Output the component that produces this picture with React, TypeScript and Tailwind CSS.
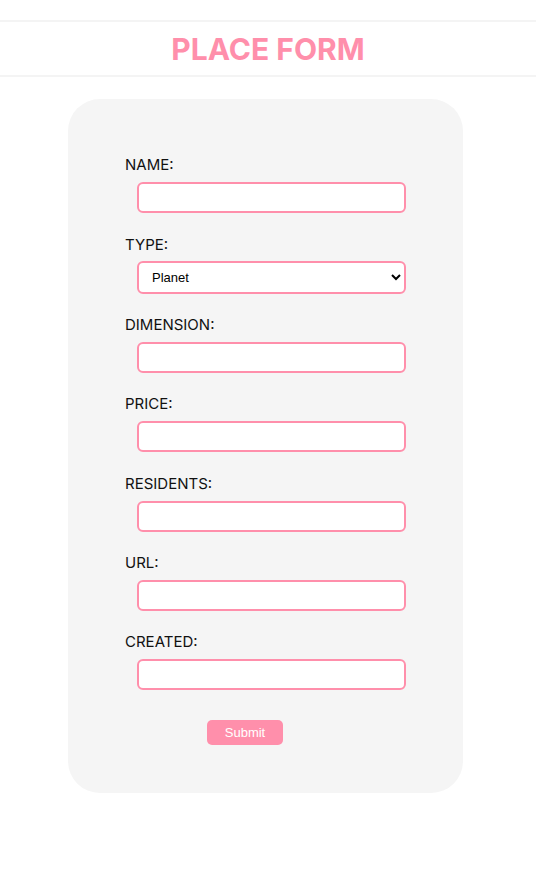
import React from "react";

const fields = [
  { label: "NAME:", type: "input" },
  { label: "TYPE:", type: "select" },
  { label: "DIMENSION:", type: "input" },
  { label: "PRICE:", type: "input" },
  { label: "RESIDENTS:", type: "input" },
  { label: "URL:", type: "input" },
  { label: "CREATED:", type: "input" },
];

export default function App() {
  return (
    <div className="min-h-[880px] bg-white pt-5 font-['Inter',sans-serif] text-[#111]">
      <header className="border-y-2 border-[#f4f4f4] pt-[7px] pb-[6px] text-center">
        <h1 className="text-[30px] font-bold leading-[40px] text-[#ff8fab]">PLACE FORM</h1>
      </header>
      <form
        className="ml-[68px] mt-[22px] flex w-[395px] flex-col gap-[22.33px] rounded-[32px] bg-[#f5f5f5] px-[57px] pt-[57.4px] pb-[48px]"
        onSubmit={(e) => e.preventDefault()}
      >
        {fields.map((f) => (
          <div key={f.label} className="flex flex-col">
            <label className="block text-[15px] leading-[18px]">{f.label}</label>
            {f.type === "select" ? (
              <select
                className="ml-[12px] mt-[7px] h-[33px] rounded-[6px] border-2 border-[#ff8fab] bg-white pl-[9px] pr-[4px] font-['Liberation_Sans',Arial,sans-serif] text-[13px] text-black"
                defaultValue="Planet"
              >
                <option>Planet</option>
                <option>Moon</option>
                <option>Star</option>
              </select>
            ) : (
              <input
                className="ml-[12px] mt-[8px] h-[31px] rounded-[6px] border-2 border-[#ff8fab] bg-white px-2 font-['Liberation_Sans',Arial,sans-serif] text-[13px] outline-none"
                type="text"
              />
            )}
          </div>
        ))}
        <button
          type="submit"
          className="ml-[82px] mt-[7px] h-[25.5px] w-[76px] rounded-[5px] bg-[#ff8fab] font-['Liberation_Sans',Arial,sans-serif] text-[13px] text-white"
        >
          Submit
        </button>
      </form>
    </div>
  );
}
